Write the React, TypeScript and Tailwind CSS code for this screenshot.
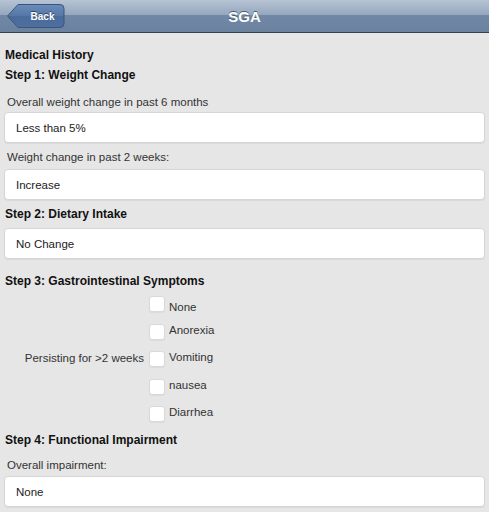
import React from 'react';

const symptoms = [
  { label: 'None', shift: 'mt-[3px]' },
  { label: 'Anorexia', shift: '-mt-[2px]' },
  { label: 'Vomiting', shift: '-mt-[2px]' },
  { label: 'nausea', shift: '-mt-[2px]' },
  { label: 'Diarrhea', shift: '-mt-[2px]' },
];

function BackButton() {
  return (
    <button type="button" className="relative h-[26px] w-[58px] ml-[7px]">
      <svg className="absolute inset-0" width="58" height="26" viewBox="0 0 58 26">
        <defs>
          <linearGradient id="bk" x1="0" y1="0" x2="0" y2="1">
            <stop offset="0" stopColor="#6a8cbb" />
            <stop offset="0.5" stopColor="#5577a6" />
            <stop offset="0.5" stopColor="#486b9c" />
            <stop offset="1" stopColor="#4d70a1" />
          </linearGradient>
        </defs>
        <path
          d="M0.5 13 L11 1.5 H53 Q57 1.5 57 5.5 V20.5 Q57 24.5 53 24.5 H11 Z"
          fill="url(#bk)"
          stroke="#3b5579"
          strokeWidth="1"
        />
      </svg>
      <span className="relative block pl-[13px] pt-[1px] text-[10px] font-bold text-white [text-shadow:0_-1px_0_#2d4566]">
        Back
      </span>
    </button>
  );
}

function Field({ value }: { value: string }) {
  return (
    <div className="mx-[4px] h-[31px] rounded-[4px] border border-[#d6d6d6] bg-white pl-[11px] pt-[1px] leading-[29px] text-[11.5px] text-[#222] shadow-[0_1px_1px_rgba(0,0,0,0.06)]">
      {value}
    </div>
  );
}

export default function App() {
  return (
    <div className="h-[512px] w-[489px] overflow-hidden bg-[#e6e6e6] font-['Liberation_Sans',Arial,sans-serif]">
      <header className="relative flex h-[33px] items-center border-b border-[#34414f] bg-[linear-gradient(to_bottom,#b6c3d4_0%,#95a7bd_47%,#7088a6_48%,#6b829f_100%)]">
        <BackButton />
        <h1 className="absolute left-0 right-0 top-[6px] text-center text-[15px] font-bold text-white [text-shadow:0_-1px_0_#4a5a70]">
          SGA
        </h1>
      </header>

      <div className="mt-[12px] h-[20px] pl-[5px] text-[12px] font-bold leading-[20px] text-[#111]">Medical History</div>
      <div className="h-[20px] pl-[5px] text-[12px] font-bold leading-[20px] text-[#111]">Step 1: Weight Change</div>

      <div className="mt-[7px] h-[20px] pl-[7px] text-[11.5px] leading-[20px] text-[#333]">Overall weight change in past 6 months</div>
      <Field value="Less than 5%" />

      <div className="mt-[4px] h-[20px] pl-[7px] text-[11.5px] leading-[20px] text-[#333]">Weight change in past 2 weeks:</div>
      <div className="mt-[2px]">
        <Field value="Increase" />
      </div>

      <div className="mt-[4px] h-[20px] pl-[5px] text-[12px] font-bold leading-[20px] text-[#111]">Step 2: Dietary Intake</div>
      <div className="mt-[4px]">
        <Field value="No Change" />
      </div>

      <div className="mt-[12px] h-[20px] pl-[5px] text-[12px] font-bold leading-[20px] text-[#111]">Step 3: Gastrointestinal Symptoms</div>

      <div className="mt-[5px] flex items-center">
        <div className="w-[144px] text-right text-[11.5px] text-[#333]">Persisting for &gt;2 weeks</div>
        <div className="ml-[5px] flex flex-col gap-[11.5px]">
          {symptoms.map((s) => (
            <label key={s.label} className="flex h-[16px] items-start">
              <span className="h-[16px] w-[16px] rounded-[3px] border border-[#d9d9d9] bg-white shadow-[0_1px_1px_rgba(0,0,0,0.05)]" />
              <span className={`ml-[4px] text-[11.5px] leading-[16px] text-[#333] ${s.shift}`}>{s.label}</span>
            </label>
          ))}
        </div>
      </div>

      <div className="mt-[8px] h-[20px] pl-[5px] text-[12px] font-bold leading-[20px] text-[#111]">Step 4: Functional Impairment</div>
      <div className="mt-[5px] h-[20px] pl-[7px] text-[11.5px] leading-[20px] text-[#333]">Overall impairment:</div>
      <div className="mt-[1px]">
        <Field value="None" />
      </div>
    </div>
  );
}
